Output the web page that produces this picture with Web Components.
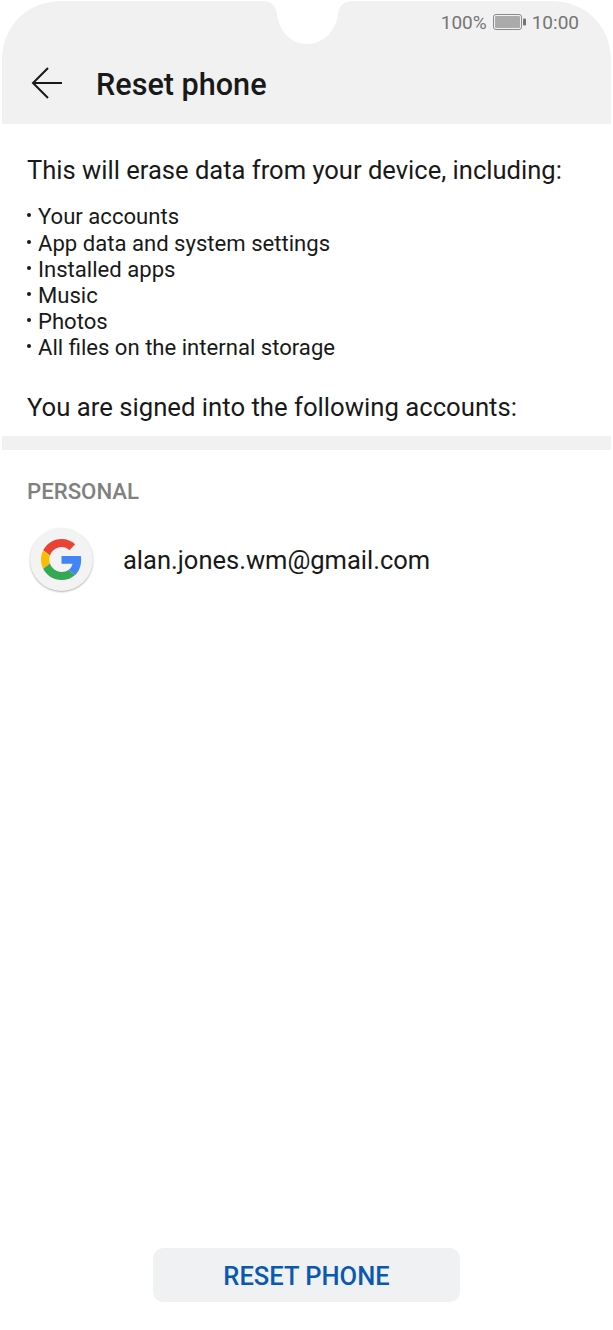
<!DOCTYPE html>
<html>
<head>
<meta charset="utf-8">
<title>Reset phone</title>
<style>
  html, body { margin: 0; padding: 0; background: #fff; }
  body { font-family: Roboto, "Liberation Sans", sans-serif; width: 613px; height: 1330px; overflow: hidden; }
</style>
</head>
<body>
<reset-screen>
  <app-header title="Reset phone"></app-header>
  <erase-summary>
    <li>Your accounts</li>
    <li>App data and system settings</li>
    <li>Installed apps</li>
    <li>Music</li>
    <li>Photos</li>
    <li>All files on the internal storage</li>
  </erase-summary>
  <account-list label="PERSONAL">
    <account-row email="alan.jones.wm@gmail.com"></account-row>
  </account-list>
  <reset-button slot="footer">RESET PHONE</reset-button>
</reset-screen>

<script>
class ResetScreen extends HTMLElement {
    constructor() {
        super();
        this.attachShadow({ mode: 'open' });
        this.shadowRoot.innerHTML = `
        <style>
            :host { display: flex; flex-direction: column; height: 1330px; padding-top: 1px; box-sizing: border-box; }
            .main { flex: 1; }
            .footer { display: flex; justify-content: center; padding-bottom: 28px; }
        </style>
        <div class="main"><slot></slot></div>
        <div class="footer"><slot name="footer"></slot></div>
        `;
    }
}

class AppHeader extends HTMLElement {
    constructor() {
        super();
        this.attachShadow({ mode: 'open' });
        this.shadowRoot.innerHTML = `
        <style>
            :host { display: block; position: relative; height: 123px; margin: 0 2px; color: #191919; }
            .shape { position: absolute; inset: 0; width: 609px; height: 123px; }
            .status { position: relative; display: flex; justify-content: flex-end; align-items: center; gap: 6px; height: 42px; padding-right: 32px; font-size: 19px; color: #757575; }
            .bar { position: relative; display: flex; align-items: center; gap: 32px; height: 83px; padding: 0 0 0 29px; box-sizing: border-box; }
            .bar svg { display: block; margin-top: -3px; }
            h1 { margin: 1px 0 0; font-size: 30.6px; font-weight: 500; line-height: 34px; }
        </style>
        <svg class="shape" viewBox="0 0 609 123">
            <path fill="#f1f1f1" d="M0 123V60C0 25 25 0 60 0H261C269 0 274 5 275 13C277 30 289 43 305 43C321 43 334 30 336 13C337 5 342 0 350 0H549C584 0 609 25 609 60V123Z"/>
        </svg>
        <div class="status">
            <span>100%</span>
            <svg width="33" height="16" viewBox="0 0 33 16">
                <rect x="0.5" y="0.5" width="28" height="15" rx="2.5" fill="none" stroke="#8a8a8a"/>
                <rect x="2" y="2" width="25" height="12" rx="1" fill="#ababab"/>
                <rect x="30" y="4.5" width="3" height="7" rx="1" fill="#757575"/>
            </svg>
            <span>10:00</span>
        </div>
        <div class="bar">
            <svg width="33" height="34" viewBox="0 0 33 34" fill="none" stroke="#191919" stroke-width="2">
                <path d="M31 17H2"/>
                <path d="M17 2L2 17L17 32"/>
            </svg>
            <h1></h1>
        </div>
        `;
        this.shadowRoot.querySelector('h1').textContent = this.getAttribute('title');
    }
}

class EraseSummary extends HTMLElement {
    constructor() {
        super();
        this.attachShadow({ mode: 'open' });
        this.shadowRoot.innerHTML = `
        <style>
            :host { display: block; color: #191919; padding: 28px 27px 11px 25px; border-bottom: 14px solid #f1f1f1; margin: 0 2px; }
            p { margin: 0; font-size: 25.55px; line-height: 36px; white-space: nowrap; }
            p.last { font-size: 25.7px; }
            .list { display: block; margin: 15.4px 0 28.4px; font-size: 22.1px; line-height: 26.2px; }
            ::slotted(li) { display: block; padding-left: 11px; position: relative; }
            .list ::slotted(li)::before { content: ""; position: absolute; left: 0; top: 10px; width: 4px; height: 4px; border-radius: 50%; background: #191919; }
        </style>
        <p>This will erase data from your device, including:</p>
        <div class="list"><slot></slot></div>
        <p class="last">You are signed into the following accounts:</p>
        `;
    }
}

class AccountList extends HTMLElement {
    constructor() {
        super();
        this.attachShadow({ mode: 'open' });
        this.shadowRoot.innerHTML = `
        <style>
            :host { display: block; padding: 27px 27px 0; }
            .label { font-size: 22.2px; font-weight: 500; line-height: 28px; color: #808080; }
        </style>
        <div class="label"></div>
        <slot></slot>
        `;
        this.shadowRoot.querySelector('.label').textContent = this.getAttribute('label');
    }
}

class AccountRow extends HTMLElement {
    constructor() {
        super();
        this.attachShadow({ mode: 'open' });
        this.shadowRoot.innerHTML = `
        <style>
            :host { display: flex; align-items: center; gap: 30px; margin-top: 23px; padding-left: 2px; color: #191919; font-size: 25.5px; }
            .badge { display: flex; align-items: center; justify-content: center; width: 63px; height: 63px; margin-left: 1px; border-radius: 50%; background: #f3f3f3; box-shadow: 0 1px 2px rgba(0,0,0,.3); }
        </style>
        <div class="badge">
            <svg width="41" height="41" viewBox="0 0 48 48">
                <path fill="#ea4335" d="M24 9.5c3.54 0 6.71 1.22 9.21 3.6l6.85-6.85C35.9 2.38 30.47 0 24 0 14.62 0 6.51 5.38 2.56 13.22l7.98 6.19C12.43 13.72 17.74 9.5 24 9.5z"/>
                <path fill="#4285f4" d="M46.98 24.55c0-1.57-.15-3.09-.38-4.55H24v9.02h12.94c-.58 2.96-2.26 5.48-4.78 7.18l7.73 6c4.51-4.18 7.09-10.36 7.09-17.65z"/>
                <path fill="#fbbc05" d="M10.53 28.59c-.48-1.45-.76-2.99-.76-4.59s.27-3.14.76-4.59l-7.98-6.19C.92 16.46 0 20.12 0 24c0 3.88.92 7.54 2.56 10.78l7.97-6.19z"/>
                <path fill="#34a853" d="M24 48c6.48 0 11.93-2.13 15.89-5.81l-7.73-6c-2.15 1.45-4.92 2.3-8.16 2.3-6.26 0-11.57-4.22-13.47-9.91l-7.98 6.19C6.51 42.62 14.62 48 24 48z"/>
            </svg>
        </div>
        <span></span>
        `;
        this.shadowRoot.querySelector('span').textContent = this.getAttribute('email');
    }
}

class ResetButton extends HTMLElement {
    constructor() {
        super();
        this.attachShadow({ mode: 'open' });
        this.shadowRoot.innerHTML = `
        <style>
            :host { display: flex; align-items: center; justify-content: center; width: 307px; height: 54px; padding-top: 2px; box-sizing: border-box; border-radius: 10px; background: #f0f1f3; color: #0a59b0; font-size: 25.5px; font-weight: 500; }
        </style>
        <slot></slot>
        `;
    }
}

customElements.define('reset-screen', ResetScreen);
customElements.define('app-header', AppHeader);
customElements.define('erase-summary', EraseSummary);
customElements.define('account-list', AccountList);
customElements.define('account-row', AccountRow);
customElements.define('reset-button', ResetButton);
</script>
</body>
</html>
